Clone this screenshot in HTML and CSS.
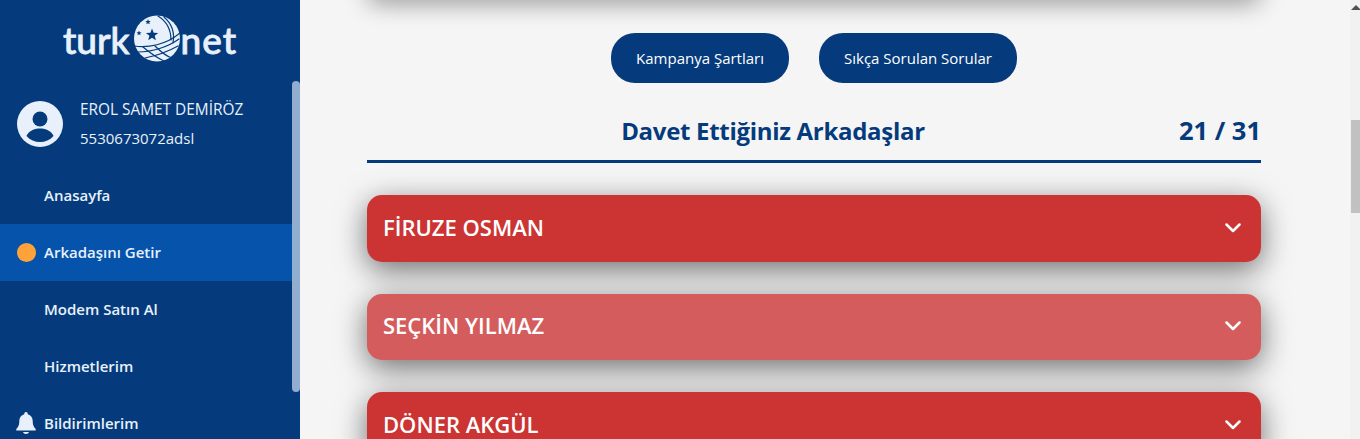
FILE: index.html
```html
<!DOCTYPE html>
<html lang="tr">
<head>
    <meta charset="UTF-8">
    <meta name="viewport" content="width=device-width, initial-scale=1.0">
    <title>Arkadaşını Getir</title>
    <link rel="stylesheet" href="styles.css">
</head>
<body>
    <aside class="sidebar">
        <div class="sidebar-icerik">
            <div class="logo">
                <span class="logo-yazi">turk</span>
                <svg class="logo-kure" viewBox="0 0 46 47">
                    <circle cx="23" cy="23.5" r="23" fill="#e8f1fb"/>
                    <path d="M15 16.5l1.7 4.2 4.5.2-3.5 2.9 1.2 4.4-3.9-2.5-3.8 2.5 1.2-4.4-3.5-2.9 4.500-.2z" fill="#053b7c" transform="translate(3 -3)"/>
                    <path d="M14 4l.8 1.900 2 .1-1.600 1.300.6 2-1.800-1.100-1.700 1.100.5-2-1.500-1.300 2-.1z" fill="#053b7c"/>
                    <path d="M5 12.500l.7 1.700 1.800.1-1.400 1.100.5 1.800-1.600-1-1.500 1 .4-1.800-1.300-1.100 1.800-.1z" fill="#053b7c" transform="translate(0 3)"/>
                    <g fill="none" stroke="#053b7c" stroke-width="1.200" stroke-linecap="round">
                        <path d="M24 1c8 5 13 13 13 24"/>
                        <path d="M30 2c7 6 11 15 9 26"/>
                        <path d="M0 31c14 2 32-1 46-13"/>
                        <path d="M4 37c14 0 30-5 41-13"/>
                        <path d="M11 43c10-2 24-7 33-12"/>
                        <path d="M9 32c6 5 12 10 21 14"/>
                        <path d="M21 31c5 5 10 10 17 12"/>
                    </g>
                </svg>
                <span class="logo-yazi logo-net">net</span>
            </div>

            <div class="kullanici">
                <svg class="avatar" viewBox="0 0 46 46">
                    <circle cx="23" cy="23" r="23" fill="#e8f1fb"/>
                    <circle cx="23" cy="18" r="7.500" fill="#053b7c"/>
                    <path d="M9.500 35c2-5 7.500-7.500 13.500-7.500s11.500 2.500 13.500 7.500c-3.500 4-8.300 6-13.500 6s-10-2-13.500-6z" fill="#053b7c"/>
                </svg>
                <div class="kullanici-bilgi">
                    <div class="kullanici-ad">EROL SAMET DEMİRÖZ</div>
                    <div>5530673072adsl</div>
                </div>
            </div>

            <nav class="menu">
                <a class="menu-satir">Anasayfa</a>
                <a class="menu-satir aktif"><span class="nokta"></span>Arkadaşını Getir</a>
                <a class="menu-satir">Modem Satın Al</a>
                <a class="menu-satir">Hizmetlerim</a>
                <a class="menu-satir">
                    <svg class="zil" viewBox="0 0 20 22">
                        <path d="M10 0c1 0 1.700.8 1.700 1.700v.5c3.300.8 5 3.500 5 6.800 0 4 1 6 3 8v1.500H.3V17c2-2 3-4 3-8 0-3.300 1.700-6 5-6.800v-.5C8.300.8 9 0 10 0zM7 20h6c-.3 1.200-1.600 2-3 2s-2.700-.8-3-2z" fill="#e8f1fb"/>
                    </svg>
                    Bildirimlerim
                </a>
            </nav>
        </div>
        <div class="sidebar-ray"><div class="sidebar-tutamac"></div></div>
    </aside>

    <main class="icerik">
        <div class="ust-kart"></div>

        <div class="butonlar">
            <a class="buton">Kampanya Şartları</a>
            <a class="buton">Sıkça Sorulan Sorular</a>
        </div>

        <div class="baslik">
            <span></span>
            <h2>Davet Ettiğiniz Arkadaşlar</h2>
            <span class="sayac">21 / 31</span>
        </div>

        <div class="kisiler">
            <div class="kisi">FİRUZE OSMAN
                <svg class="ok" viewBox="0 0 16 10"><path d="M1.500 1.500L8 8l6.500-6.500"/></svg>
            </div>
            <div class="kisi soluk">SEÇKİN YILMAZ
                <svg class="ok" viewBox="0 0 16 10"><path d="M1.500 1.500L8 8l6.500-6.500"/></svg>
            </div>
            <div class="kisi">DÖNER AKGÜL
                <svg class="ok" viewBox="0 0 16 10"><path d="M1.500 1.500L8 8l6.500-6.500"/></svg>
            </div>
        </div>
    </main>

    <div class="sayfa-ray">
        <span class="ray-ok"></span>
        <div class="sayfa-tutamac"></div>
    </div>
</body>
</html>
```

FILE: styles.css
```css
* {
    box-sizing: border-box;
}

html, body {
    height: 100%;
}

body {
    margin: 0;
    display: flex;
    overflow: hidden;
    background: #f5f5f5;
    font-family: "Open Sans", "Noto Sans", sans-serif;
}

/* Sol menu */
.sidebar {
    width: 300px;
    flex-shrink: 0;
    display: flex;
    overflow: hidden;
    background: #053b7c;
    color: #e8f1fb;
}

.sidebar-icerik {
    flex: 1;
    min-width: 0;
}

.sidebar-ray {
    width: 8px;
    flex-shrink: 0;
    padding-top: 81px;
}

.sidebar-tutamac {
    height: 311px;
    background: #91aed0;
    border-radius: 4px;
}

.logo {
    display: flex;
    align-items: flex-end;
    justify-content: center;
    gap: 4px;
    height: 47px;
    margin-top: 15px;
    padding-left: 8px;
}

.logo-yazi {
    font-family: "Lato", sans-serif;
    font-size: 37px;
    font-weight: 500;
    line-height: 44px;
    -webkit-text-stroke: 0.8px #e8f1fb;
}

.logo-net {
    margin-left: -3px;
    letter-spacing: 1px;
}

.logo-kure {
    width: 46px;
    height: 47px;
    flex-shrink: 0;
}

.kullanici {
    display: flex;
    align-items: center;
    gap: 17px;
    height: 46px;
    margin-top: 39px;
    padding-left: 17px;
}

.avatar {
    width: 46px;
    height: 46px;
    flex-shrink: 0;
}

.kullanici-bilgi {
    font-size: 15px;
    line-height: 29px;
    white-space: nowrap;
}

.kullanici-ad {
    font-size: 15.4px;
}

.menu {
    margin-top: 20px;
}

.menu-satir {
    position: relative;
    display: flex;
    align-items: center;
    height: 57px;
    padding-left: 44px;
    border-bottom: 1px solid #04377440;
    font-size: 15px;
    font-weight: 600;
}

.menu-satir.aktif {
    background: #0553ab;
    border-bottom-color: #0553ab;
}

.nokta {
    position: absolute;
    left: 17px;
    width: 19px;
    height: 19px;
    border-radius: 50%;
    background: #ffa23a;
}

.zil {
    position: absolute;
    left: 16px;
    width: 20px;
    height: 22px;
}

/* Icerik */
.icerik {
    flex: 1;
    min-width: 0;
    padding: 0 89px 0 67px;
}

.ust-kart {
    height: 20px;
    margin-top: -24px;
    border-radius: 15px;
    background: #f5f5f5;
    box-shadow: 0 6px 25px rgba(0, 0, 0, 0.45);
}

.butonlar {
    display: flex;
    justify-content: center;
    gap: 30px;
    margin-top: 37px;
}

.buton {
    display: flex;
    align-items: center;
    height: 50px;
    padding: 0 25px;
    border-radius: 24px;
    background: #053b7c;
    color: #fff;
    font-size: 15px;
}

.baslik {
    display: flex;
    align-items: center;
    justify-content: space-between;
    height: 65px;
    margin-top: 15px;
    padding-top: 2px;
    border-bottom: 3px solid #053b7c;
    color: #053b7c;
}

.baslik h2 {
    margin: 0;
    font-size: 24px;
    font-weight: 700;
    letter-spacing: -0.3px;
}

.sayac {
    font-size: 25.5px;
    font-weight: 700;
}

.kisiler {
    display: flex;
    flex-direction: column;
    gap: 32px;
    margin-top: 32px;
}

.kisi {
    display: flex;
    align-items: center;
    justify-content: space-between;
    height: 67px;
    padding: 0 20px 4px 16px;
    border-radius: 15px;
    background: #cc3333;
    color: #fff;
    font-size: 22px;
    font-weight: 600;
    box-shadow: 0 8px 30px rgba(0, 0, 0, 0.55);
}

.kisi.soluk {
    height: 66px;
    background: #d55c5c;
}

.ok {
    width: 16px;
    height: 10px;
    margin-top: 2px;
    fill: none;
    stroke: #fff;
    stroke-width: 2.500;
    stroke-linecap: round;
    stroke-linejoin: round;
}

/* Sayfa kaydirma cubugu */
.sayfa-ray {
    width: 10px;
    flex-shrink: 0;
    padding: 5px 0 0 1px;
    background: #f1f1f1;
}

.ray-ok {
    display: block;
    width: 0;
    height: 0;
    border-left: 5px solid transparent;
    border-right: 5px solid transparent;
    border-bottom: 5px solid #505050;
}

.sayfa-tutamac {
    height: 93px;
    margin-top: 110px;
    background: #c1c1c1;
}
```
